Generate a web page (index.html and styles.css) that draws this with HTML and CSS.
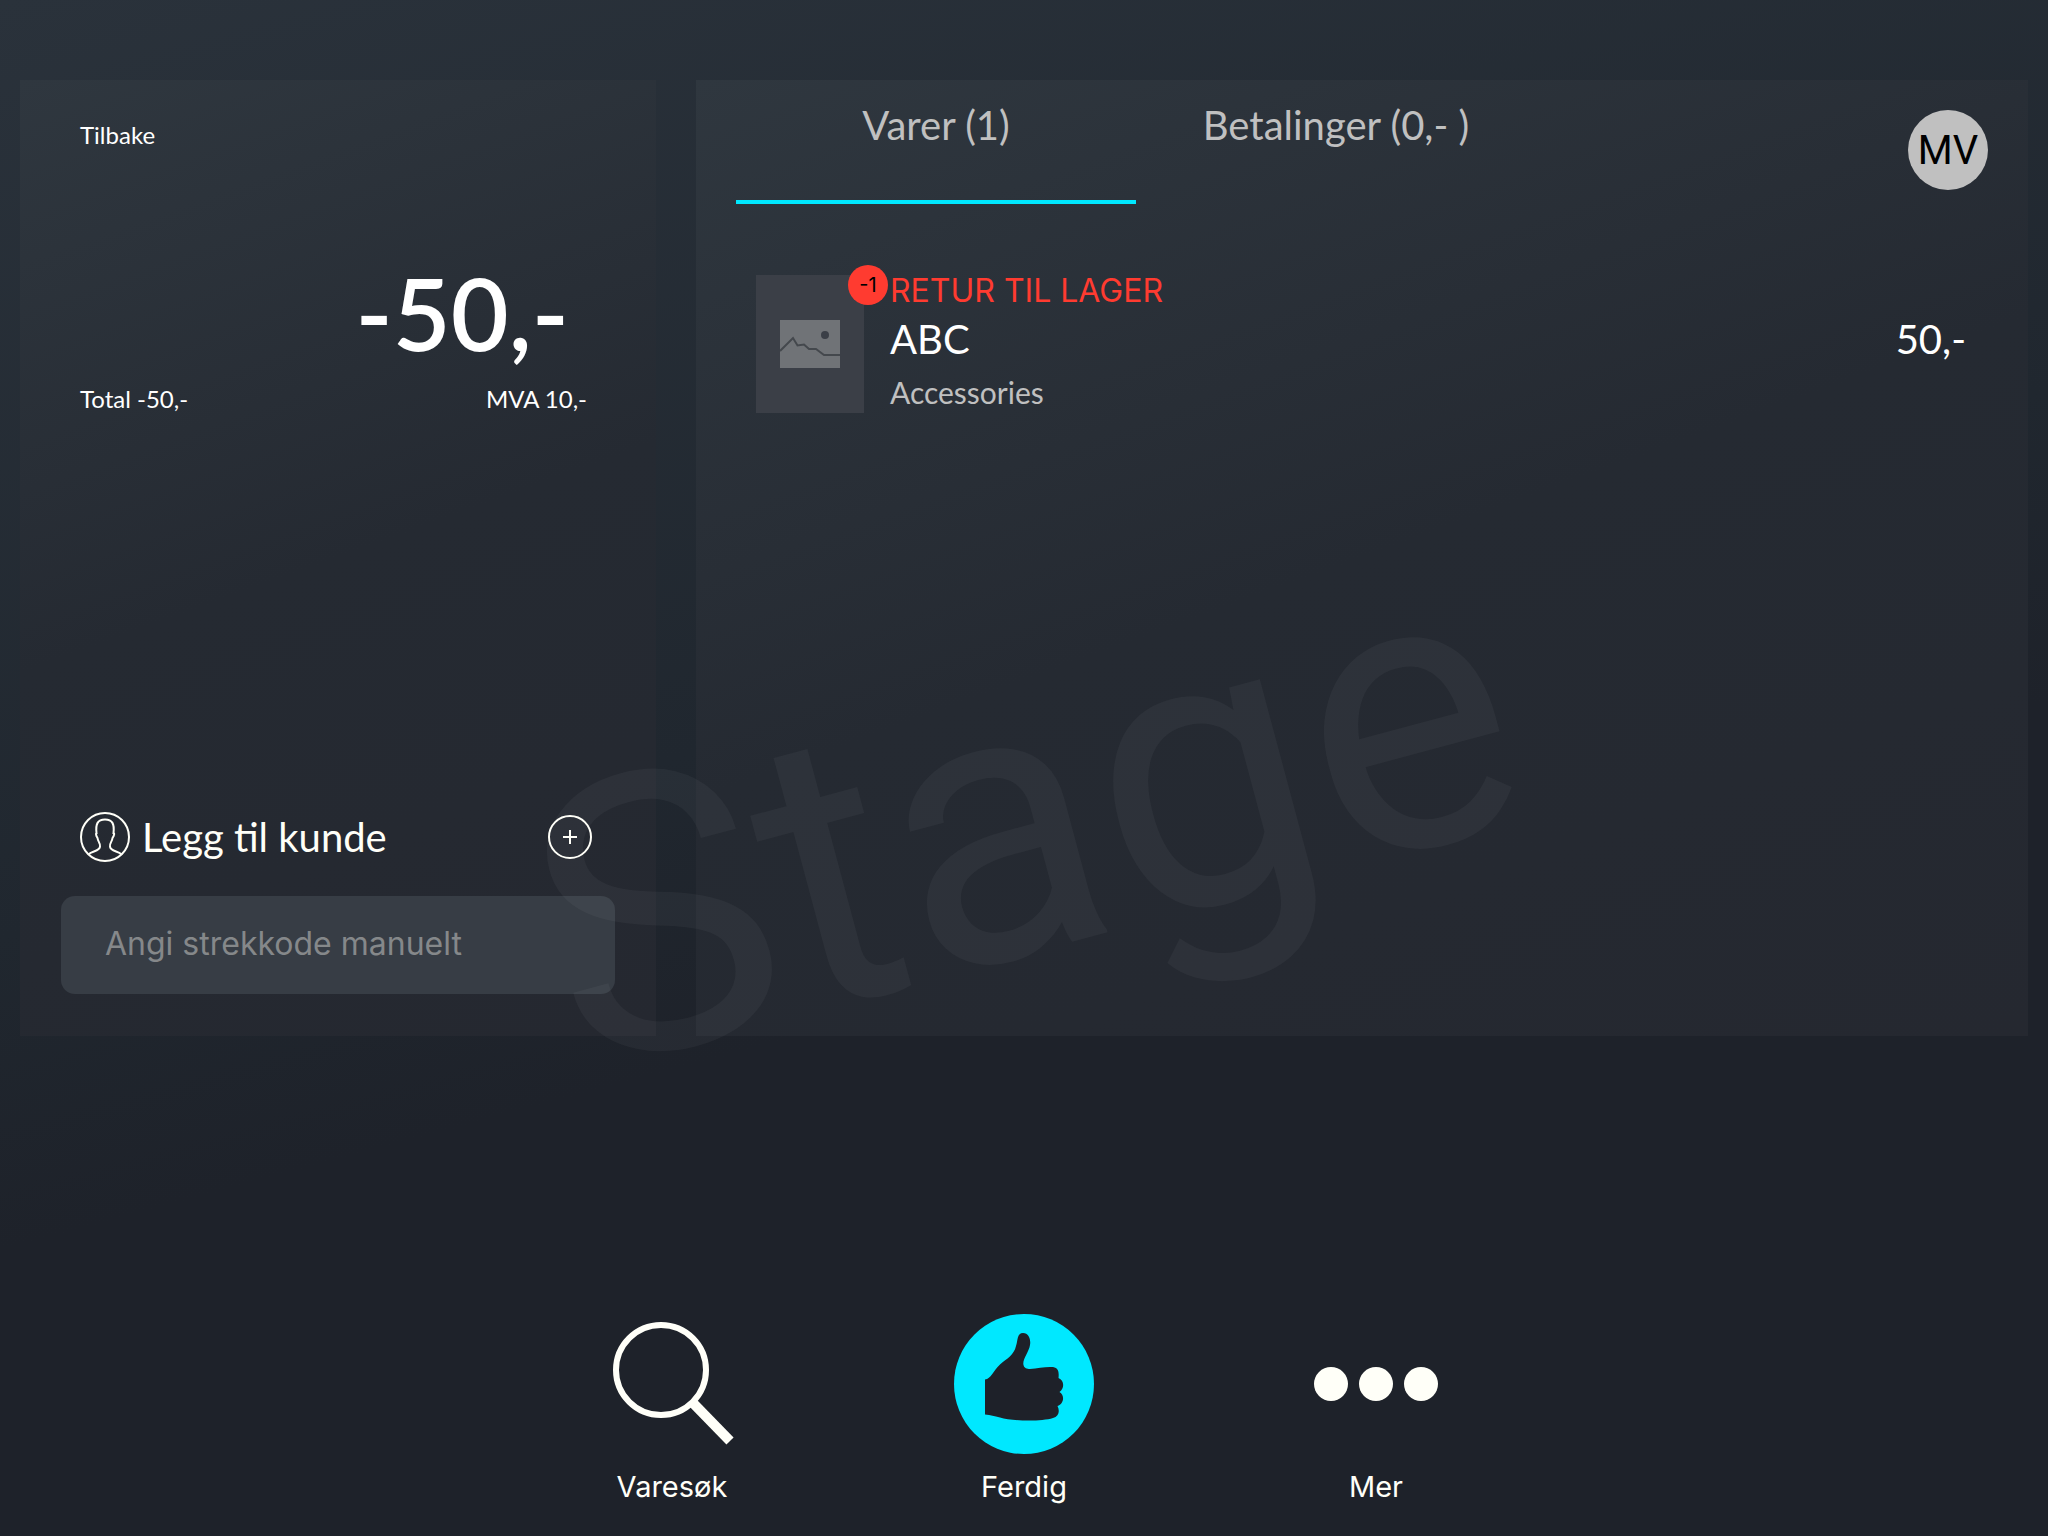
FILE: index.html
```html
<!DOCTYPE html>
<html lang="no">
<head>
  <meta charset="UTF-8">
  <meta name="viewport" content="width=device-width, initial-scale=1.0">
  <title>Kasse</title>
  <link rel="stylesheet" href="styles.css">
</head>
<body>

  <main class="panels">
    <section class="panel summary">
      <button class="back">Tilbake</button>
      <div class="amount">-50,-</div>
      <div class="totals">
        <span>Total -50,-</span>
        <span>MVA 10,-</span>
      </div>

      <button class="customer">
        <svg class="customer-icon" viewBox="0 0 50 50">
          <circle cx="25" cy="25" r="24"/>
          <path d="M8.500 42.500 C11 39 20 39.500 20 34.500 C20.500 31 18 30 17.500 26 C15.500 23 16 21 16.500 21 C15.500 12 17.500 7.500 25 7.500 C32.500 7.500 34.500 12 33.500 21 C34.500 21 34.500 23 32.500 26 C32 30 29.500 31 30 34.500 C30 39.500 39 39 41.500 42.500"/>
        </svg>
        <span class="customer-label">Legg til kunde</span>
        <svg class="plus-icon" viewBox="0 0 44 44">
          <circle cx="22" cy="22" r="21"/>
          <path d="M22 15 V29 M15 22 H29"/>
        </svg>
      </button>

      <input class="barcode" type="text" placeholder="Angi strekkode manuelt" aria-label="Angi strekkode manuelt">
    </section>

    <section class="panel items">
      <header class="items-header">
        <div class="tabs" role="tablist">
          <button class="tab active" role="tab" aria-selected="true">Varer (1)</button>
          <button class="tab" role="tab" aria-selected="false">Betalinger (0,- )</button>
        </div>
        <button class="avatar">MV</button>
      </header>

      <ul class="item-list">
        <li class="item">
          <div class="thumb">
            <svg class="thumb-icon" viewBox="0 0 60 48">
              <rect width="60" height="48"/>
              <circle cx="45" cy="15" r="4"/>
              <path d="M0 31 L13 18 L17.500 25.500 L24 24.500 L29 29 L36 29 L44 35 L60 35"/>
            </svg>
            <span class="badge">-1</span>
          </div>
          <div class="item-text">
            <div class="item-status">RETUR TIL LAGER</div>
            <div class="item-name">ABC</div>
            <div class="item-group">Accessories</div>
          </div>
          <div class="item-price">50,-</div>
        </li>
      </ul>
    </section>
  </main>

  <footer class="toolbar">
    <button class="action">
      <svg class="action-icon" viewBox="0 0 140 140">
        <circle cx="59" cy="56" r="45" fill="none" stroke="currentColor" stroke-width="6"/>
        <path d="M91 89 L128 127" stroke="currentColor" stroke-width="10"/>
      </svg>
      <span>Varesøk</span>
    </button>
    <button class="action">
      <svg class="action-icon" viewBox="0 0 140 140">
        <circle class="accent" cx="70" cy="70" r="70"/>
        <path class="thumb-up" d="M31 65.500 C37 65 39 57 46 50.500 C53 44.500 60 41 62 32 C64 26 63 19 69 19 C75 19 77 26 76 31 C75 38 68 46 69.500 51 C70 54 73 55 76 55 C84 54 92 52.500 99 53 C105 54 105 59 104.500 64 C110 66 111 74 105.500 78 C111 81 110 90 103.500 92 C106 97 105 102 99 104 C86 108 58 107 46 103.500 C40 102 37 101 31 100.500 Z"/>
      </svg>
      <span>Ferdig</span>
    </button>
    <button class="action">
      <svg class="action-icon" viewBox="0 0 140 140">
        <g fill="currentColor">
          <circle cx="25" cy="70" r="17"/>
          <circle cx="70" cy="70" r="17"/>
          <circle cx="115" cy="70" r="17"/>
        </g>
      </svg>
      <span>Mer</span>
    </button>
  </footer>

  <div class="watermark">Stage</div>

</body>
</html>
```
FILE: styles.css
```css
* {
  box-sizing: border-box;
}

body {
  display: flex;
  flex-direction: column;
  min-height: 100vh;
  margin: 0;
  padding: 80px 20px 0;
  position: relative;
  overflow: hidden;
  background: linear-gradient(165deg, #2a323b 0%, #20272f 45%, #1e222a 60%);
  color: #fff;
  font-family: Lato, sans-serif;
  font-size: 24px;
}

button {
  padding: 0;
  border: none;
  background: none;
  color: inherit;
  font: inherit;
  cursor: pointer;
}

/* Panels */
.panels {
  flex: 1;
  display: grid;
  grid-template-columns: 636fr 1332fr;
  gap: 40px;
}

.panel {
  background: linear-gradient(160deg, #2f373f 0%, #252a32 50%, #252830 100%);
}

.summary {
  display: flex;
  flex-direction: column;
  padding: 40px 41px 42px;
  line-height: 30px;
}

.back {
  align-self: flex-start;
  margin-left: 19px;
}

.amount {
  margin: 102px 46px 12px;
  font-size: 100px;
  font-weight: 600;
  line-height: 120px;
  text-align: right;
}

.totals {
  display: flex;
  justify-content: space-between;
  margin: 0 28px 0 19px;
}

.customer {
  display: flex;
  align-items: center;
  gap: 12px;
  margin: auto 23px 34px 19px;
  color: #fffff8;
  font-size: 40px;
  line-height: 48px;
}

.customer-label {
  flex: 1;
  text-align: left;
}

.customer-icon,
.plus-icon {
  fill: none;
  stroke: currentColor;
  stroke-width: 2;
}

.customer-icon {
  width: 50px;
  height: 50px;
}

.plus-icon {
  width: 44px;
  height: 44px;
}

.barcode {
  width: 100%;
  height: 98px;
  padding: 0 44px 4px;
  border: none;
  border-radius: 14px;
  background: #373d45;
  color: #fff;
  font-family: Inter, sans-serif;
  font-size: 32px;
}

.barcode::placeholder {
  color: #85888a;
  opacity: 1;
}

/* Items */
.items {
  padding: 0 40px;
}

.items-header {
  display: flex;
  justify-content: space-between;
}

.tabs {
  display: flex;
}

.tab {
  width: 400px;
  height: 124px;
  padding-bottom: 30px;
  border-bottom: 4px solid transparent;
  color: #c0c0c0;
  font-size: 40px;
}

.tab.active {
  border-color: #00e8ff;
}

.avatar {
  width: 80px;
  height: 80px;
  margin-top: 30px;
  border-radius: 50%;
  background: #c0c0c0;
  color: #000;
  font-family: Roboto, sans-serif;
  font-size: 40px;
}

.item-list {
  margin: 67px 0 0;
  padding: 0 22px 0 20px;
  list-style: none;
}

.item {
  display: flex;
  align-items: center;
  gap: 26px;
}

.thumb {
  position: relative;
  display: flex;
  align-items: center;
  justify-content: center;
  width: 108px;
  height: 138px;
  background: #3b3f47;
}

.thumb-icon {
  width: 60px;
  height: 48px;
  fill: #707377;
}

.thumb-icon circle {
  fill: #3b3f47;
}

.thumb-icon path {
  fill: none;
  stroke: #44484d;
  stroke-width: 2;
}

.badge {
  position: absolute;
  top: -10px;
  right: -24px;
  width: 40px;
  height: 40px;
  border-radius: 50%;
  background: #ff3b30;
  color: #000;
  font-family: Inter, sans-serif;
  font-size: 20px;
  line-height: 40px;
  text-align: center;
}

.item-text {
  flex: 1;
}

.item-status {
  color: #ff3b30;
  font-family: Inter, sans-serif;
  font-size: 32px;
  line-height: 40px;
}

.item-name,
.item-price {
  font-size: 40px;
  line-height: 56px;
}

.item-price {
  padding-bottom: 10px;
}

.item-group {
  color: #c0c0c0;
  font-size: 30px;
  line-height: 50px;
}

/* Bottom actions */
.toolbar {
  display: flex;
  align-items: flex-end;
  justify-content: center;
  height: 500px;
  padding-bottom: 30px;
}

.action {
  display: flex;
  flex-direction: column;
  align-items: center;
  gap: 14px;
  width: 352px;
  color: #fffff8;
  font-family: Inter, sans-serif;
  font-size: 29px;
  line-height: 38px;
}

.action-icon {
  width: 140px;
  height: 140px;
}

.accent {
  fill: #00e8ff;
}

.thumb-up {
  fill: #1e2129;
}

.watermark {
  position: absolute;
  top: 50%;
  left: 50%;
  margin-top: 50px;
  transform: translate(-50%, -50%) rotate(-15deg);
  color: rgba(255, 255, 255, 0.04);
  font-family: Roboto, sans-serif;
  font-size: 388px;
  line-height: 1;
  pointer-events: none;
}
```
